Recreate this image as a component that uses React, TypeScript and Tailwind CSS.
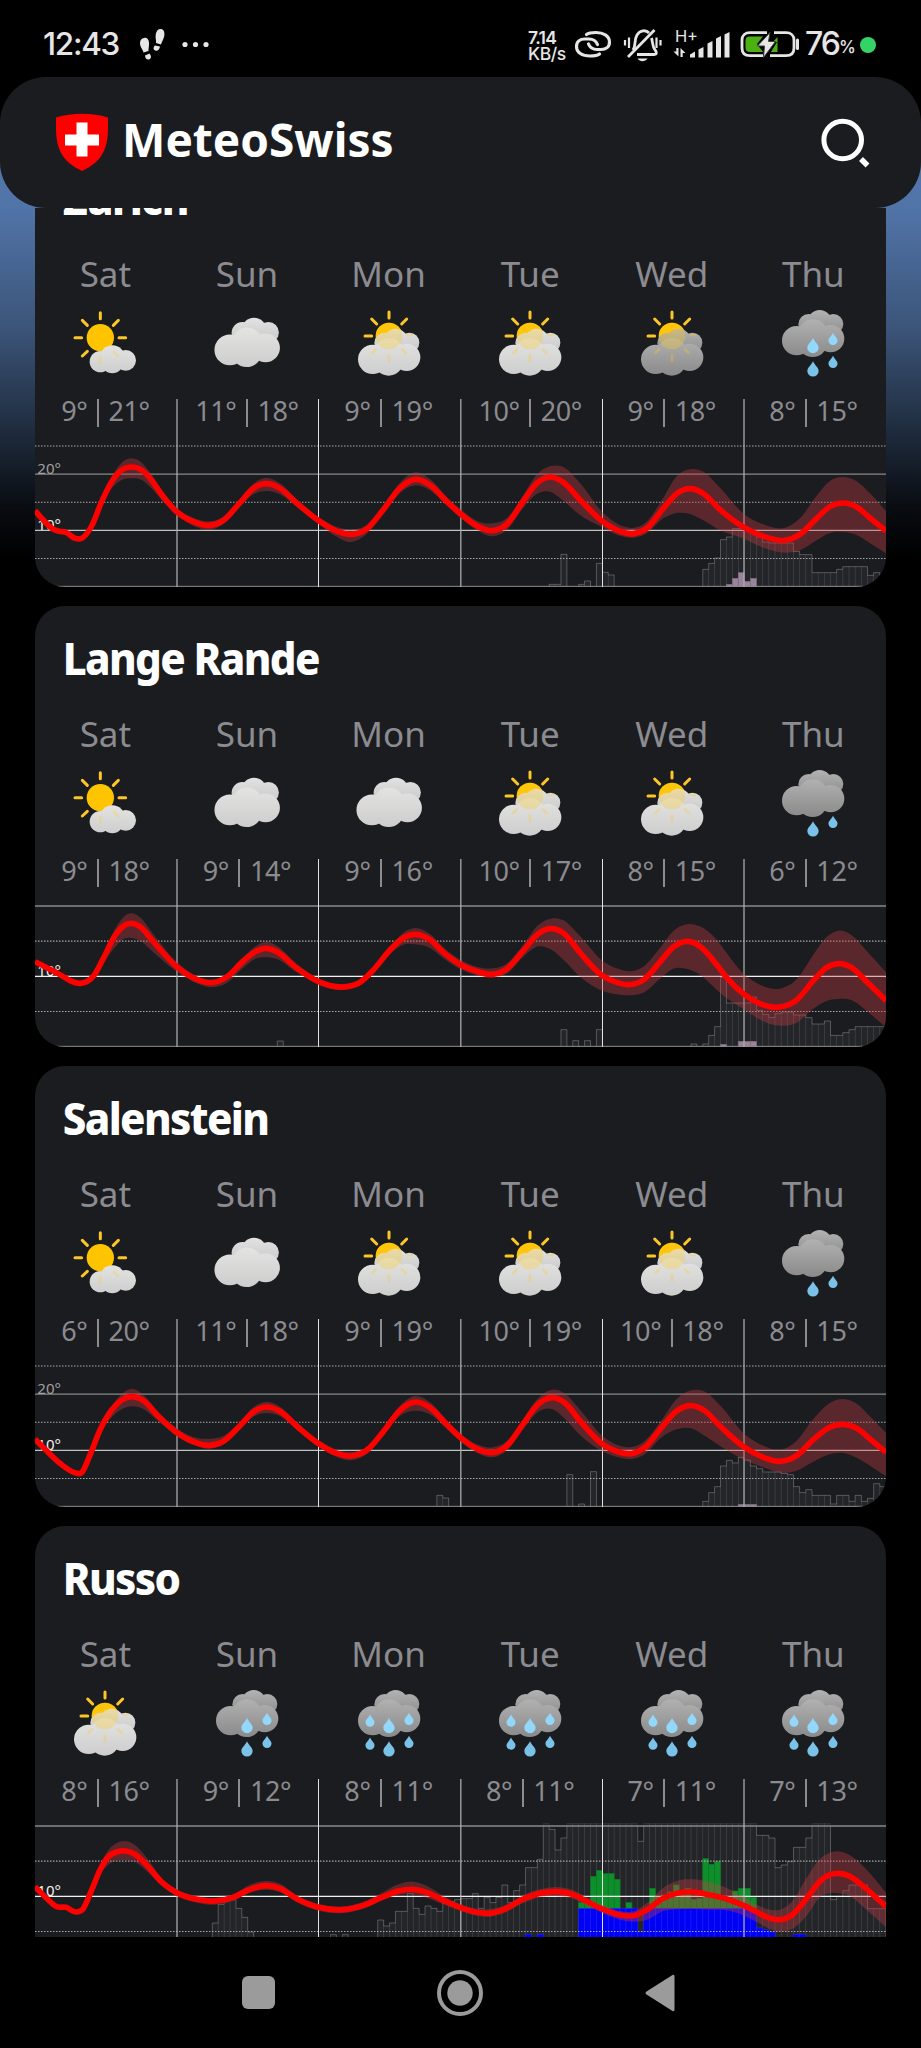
import React from "react";

type Sky = "sunSmallCloud" | "cloudy" | "sunClouds" | "sunGrey" | "rain2" | "rain4" | "rain6";
// x, y, upper spread, lower spread (three units per pixel)
type CurvePoint = [number, number, number, number];
// first hour index, bar heights
type Run = [number, number[]];

interface Station {
  name: string;
  days: { day: string; sky: Sky; low: number; high: number }[];
  max: 20 | 25;
  curve: CurvePoint[];
  chance: Run[];
  pink?: Run[];
  blue?: Run[];
  green?: Run[];
}

const W = 2553;
const H = 564;
const DAY = 425.5;

const times = (n: number, v: number): number[] => Array.from({ length: n }, () => v);

const DAYS = ["Sat", "Sun", "Mon", "Tue", "Wed", "Thu"];
const week = (rows: [Sky, number, number][]) =>
  rows.map(([sky, low, high], i) => ({ day: DAYS[i], sky, low, high }));

const STATIONS: Station[] = [
  {
    name: "Zürich",
    max: 25,
    days: week([
      ["sunSmallCloud", 9, 21],
      ["cloudy", 11, 18],
      ["sunClouds", 9, 19],
      ["sunClouds", 10, 20],
      ["sunGrey", 9, 18],
      ["rain4", 8, 15],
    ]),
    curve: [
      [0, 335, 0, 0], [25, 363, 0, 0], [55, 391, 0, 0], [73, 397, 0, 0], [93, 400, 0, 0], [120, 418, 0, 0], [140, 418, 0, 0],
      [170, 381, 5, 5], [200, 308, 10, 10], [230, 248, 14, 20], [260, 213, 22, 30], [292, 204, 26, 34], [320, 213, 22, 30],
      [345, 238, 18, 25], [385, 293, 13, 15], [425, 338, 11, 11], [475, 368, 12, 12], [525, 379, 12, 14], [565, 364, 11, 12],
      [615, 311, 11, 13], [655, 268, 14, 18], [695, 254, 18, 22], [735, 268, 15, 18], [785, 312, 11, 12], [851, 365, 10, 10],
      [900, 394, 12, 16], [947, 406, 14, 23], [995, 390, 12, 14], [1045, 332, 13, 13], [1095, 267, 16, 15], [1142, 241, 21, 18],
      [1185, 258, 18, 16], [1235, 307, 14, 13], [1277, 345, 14, 12], [1325, 380, 15, 13], [1373, 395, 22, 17], [1415, 376, 18, 17],
      [1465, 306, 18, 20], [1505, 253, 26, 32], [1545, 234, 32, 44], [1585, 250, 46, 55], [1635, 302, 50, 46], [1702, 367, 28, 18],
      [1750, 395, 19, 14], [1797, 404, 18, 12], [1835, 388, 20, 15], [1885, 328, 32, 30], [1925, 284, 52, 58], [1965, 269, 58, 76],
      [2005, 284, 66, 80], [2055, 332, 66, 62], [2127, 385, 40, 34], [2185, 412, 36, 34], [2250, 424, 38, 37], [2295, 406, 48, 48],
      [2345, 358, 68, 66], [2385, 323, 77, 79], [2425, 312, 78, 87], [2465, 324, 77, 84], [2505, 357, 74, 76], [2553, 396, 60, 67],
    ],
    chance: [
      [87, [8, 8, 98]], [92, [8, 18]], [95, [71, 44, 36]],
      [113, [53, 71, 87, 142, 150, 175, 175, 170, 160, 150, 135, 132, 132, 132, 132, 107, 97, 97, 43, 43, 43, 43, 53, 61, 61, 61, 61, 35, 43, 35]],
    ],
    pink: [[117, [8, 26, 43, 17, 26]]],
  },
  {
    name: "Lange Rande",
    max: 20,
    days: week([
      ["sunSmallCloud", 9, 18],
      ["cloudy", 9, 14],
      ["cloudy", 9, 16],
      ["sunClouds", 10, 17],
      ["sunClouds", 8, 15],
      ["rain2", 6, 12],
    ]),
    curve: [
      [0, 308, 0, 0], [45, 331, 0, 0], [85, 353, 0, 0], [105, 365, 0, 0], [137, 373, 0, 0], [175, 352, 5, 5], [205, 298, 12, 15],
      [240, 230, 20, 35], [270, 198, 28, 40], [290, 193, 30, 44], [315, 203, 28, 42], [355, 248, 22, 32], [425, 323, 14, 15],
      [485, 361, 10, 12], [530, 371, 9, 14], [575, 354, 10, 18], [625, 306, 12, 20], [665, 276, 16, 22], [693, 268, 20, 27],
      [725, 278, 18, 22], [785, 327, 13, 13], [851, 368, 9, 9], [925, 384, 9, 9], [975, 370, 9, 9], [1015, 333, 9, 9],
      [1065, 273, 10, 12], [1105, 237, 16, 20], [1140, 226, 19, 30], [1185, 242, 17, 25], [1225, 280, 15, 18], [1277, 317, 14, 14],
      [1325, 337, 14, 12], [1373, 346, 18, 10], [1415, 330, 16, 14], [1465, 275, 18, 18], [1510, 224, 26, 38], [1547, 209, 30, 62],
      [1585, 222, 38, 80], [1635, 281, 50, 72], [1702, 350, 45, 45], [1745, 370, 42, 36], [1783, 377, 40, 32], [1825, 363, 40, 38],
      [1875, 309, 42, 50], [1915, 264, 48, 65], [1960, 247, 52, 84], [1995, 262, 60, 85], [2045, 317, 75, 75], [2075, 356, 74, 62],
      [2127, 406, 60, 45], [2175, 434, 57, 48], [2235, 444, 55, 56], [2285, 423, 62, 68], [2335, 365, 78, 84], [2375, 326, 92, 100],
      [2410, 314, 99, 106], [2450, 326, 97, 98], [2495, 368, 92, 88], [2553, 425, 85, 80],
    ],
    chance: [
      [41, [18]], [89, [52]], [91, [19]], [93, [19]], [95, [52]], [111, [9]],
      [113, [9, 35, 61, 209, 132, 132, 132, 132, 150, 110, 98, 88, 100, 105, 105, 96, 96, 88, 69, 69, 78, 35, 35, 43, 52, 61, 61, 61, 61, 61]],
    ],
    pink: [[116, [8]], [119, [17, 17, 17]]],
  },
  {
    name: "Salenstein",
    max: 25,
    days: week([
      ["sunSmallCloud", 6, 20],
      ["cloudy", 11, 18],
      ["sunClouds", 9, 19],
      ["sunClouds", 10, 19],
      ["sunClouds", 10, 18],
      ["rain2", 8, 15],
    ]),
    curve: [
      [0, 360, 0, 0], [35, 395, 0, 0], [75, 433, 0, 0], [120, 461, 0, 0], [140, 461, 0, 0], [165, 408, 0, 4], [195, 333, 8, 10],
      [230, 273, 12, 22], [260, 243, 18, 28], [292, 233, 24, 29], [325, 245, 18, 25], [370, 292, 13, 15], [425, 340, 12, 12],
      [475, 368, 14, 10], [525, 379, 20, 10], [565, 367, 16, 10], [615, 320, 11, 11], [655, 279, 14, 14], [695, 264, 16, 18],
      [735, 277, 14, 14], [785, 321, 11, 11], [851, 374, 10, 10], [900, 401, 11, 11], [947, 411, 12, 13], [995, 394, 11, 12],
      [1045, 338, 11, 12], [1095, 274, 14, 16], [1140, 249, 18, 26], [1185, 266, 16, 20], [1235, 316, 13, 14], [1277, 356, 12, 12],
      [1325, 389, 13, 12], [1373, 401, 16, 14], [1415, 381, 14, 14], [1465, 314, 14, 16], [1505, 260, 18, 22], [1553, 236, 24, 35],
      [1590, 252, 28, 48], [1635, 306, 34, 42], [1702, 375, 25, 22], [1750, 399, 20, 16], [1790, 404, 20, 16], [1830, 385, 20, 20],
      [1880, 325, 22, 30], [1925, 276, 36, 55], [1968, 260, 46, 68], [2010, 276, 58, 75], [2055, 321, 62, 60], [2127, 384, 40, 38],
      [2185, 415, 35, 30], [2235, 427, 34, 34], [2285, 410, 45, 45], [2335, 362, 62, 66], [2380, 327, 72, 80], [2425, 316, 76, 86],
      [2465, 328, 74, 88], [2505, 360, 68, 80], [2553, 400, 58, 72],
    ],
    chance: [
      [68, [35, 27]], [90, [97]], [92, [9]], [94, [106]],
      [113, [17, 43, 61, 123, 140, 132, 149, 141, 123, 115, 105, 105, 105, 101, 97, 61, 43, 52, 35, 35, 35, 9, 35, 35, 17, 35, 17, 26, 70, 61]],
    ],
    pink: [[119, [8, 8, 8]]],
  },
  {
    name: "Russo",
    max: 20,
    days: week([
      ["sunClouds", 8, 16],
      ["rain4", 9, 12],
      ["rain6", 8, 11],
      ["rain6", 8, 11],
      ["rain6", 7, 11],
      ["rain6", 7, 13],
    ]),
    curve: [
      [0, 323, 0, 0], [35, 358, 0, 0], [65, 383, 0, 0], [93, 385, 0, 0], [123, 399, 0, 0], [143, 391, 0, 0], [170, 333, 8, 8],
      [195, 273, 12, 14], [220, 233, 20, 24], [245, 219, 27, 26], [272, 216, 30, 28], [300, 226, 28, 24], [335, 258, 22, 18],
      [380, 309, 12, 12], [425, 341, 10, 10], [485, 361, 10, 10], [540, 366, 9, 11], [595, 355, 10, 10], [645, 331, 14, 10],
      [695, 320, 14, 12], [735, 328, 14, 12], [785, 359, 10, 10], [851, 385, 10, 10], [925, 392, 10, 10], [985, 379, 10, 10],
      [1045, 353, 14, 10], [1090, 336, 20, 12], [1135, 331, 23, 16], [1175, 340, 20, 16], [1225, 364, 14, 12], [1277, 386, 10, 10],
      [1325, 400, 11, 10], [1365, 403, 13, 10], [1405, 392, 11, 11], [1465, 360, 12, 12], [1515, 343, 12, 12], [1570, 338, 14, 14],
      [1615, 347, 13, 13], [1655, 367, 12, 12], [1702, 390, 12, 12], [1755, 408, 12, 14], [1795, 410, 13, 18], [1835, 393, 20, 30],
      [1885, 358, 32, 38], [1925, 343, 37, 48], [1975, 339, 38, 50], [2025, 348, 38, 44], [2075, 360, 33, 34], [2127, 380, 25, 30],
      [2165, 399, 22, 30], [2200, 416, 25, 32], [2235, 422, 30, 36], [2270, 409, 40, 42], [2315, 358, 62, 52], [2355, 307, 68, 48],
      [2385, 287, 66, 55], [2410, 283, 66, 60], [2445, 292, 63, 60], [2485, 322, 60, 62], [2553, 383, 42, 62],
    ],
    chance: [
      [30, [132, 188, 200, 202, 176, 149, 105]], [50, [97]], [52, [97]],
      [58, [141, 123, 132, 167, 167, 220, 176, 158, 183, 176, 167, 192, 195, 202, 205, 205, 220, 176, 209, 193, 209, 246, 193, 229, 246, 298, 298, 323, 431, 413, 351, 387,
        ...times(12, 431), 377, ...times(19, 431), 395, 395, 387, 298, 306, 316, 359, 359, 387, 431, 431, 431, 202, 212, 229, 246, 246, 246, 175, 175, 175]],
    ],
    blue: [[83, [98]], [85, [98]], [92, [...times(10, 175), 105, ...times(19, 175), 117, 112, 105]], [128, [98, 98]]],
    green: [
      [92, [193, 193, 272, 290, 280, 280, 263]], [100, [193]],
      [104, [236, 209, 216, 225, 246, 229, 236, 203, 206, 325, 308, 316, 205, 200, 228, 236, 236, 209]],
    ],
  },
];

// The last day holds only 23 hourly bars.
const hourX = (i: number): number =>
  i <= 120 ? (i * DAY) / 24 : 5 * DAY + ((i - 120) * DAY) / 23;

function slopeAt(points: [number, number][], i: number): number {
  const last = points.length - 1;
  const slope = (a: number) => (points[a + 1][1] - points[a][1]) / (points[a + 1][0] - points[a][0]);
  if (i === 0) return slope(0);
  if (i === last) return slope(last - 1);
  const before = points[i][0] - points[i - 1][0];
  const after = points[i + 1][0] - points[i][0];
  return (slope(i - 1) * after + slope(i) * before) / (before + after);
}

function spline(points: [number, number][]): string {
  let d = "";
  for (let i = 0; i < points.length - 1; i++) {
    const [x1, y1] = points[i];
    const [x2, y2] = points[i + 1];
    const w = (x2 - x1) / 3;
    d += `C${x1 + w} ${y1 + slopeAt(points, i) * w} ${x2 - w} ${y2 - slopeAt(points, i + 1) * w} ${x2} ${y2}`;
  }
  return d;
}

function bandPath(curve: CurvePoint[]): string {
  const up = curve.map(([x, y, u]): [number, number] => [x, y - u]);
  const down = curve.map(([x, y, , l]): [number, number] => [x, y + l]).reverse();
  return `M${up[0][0]} ${up[0][1]}${spline(up)}L${down[0][0]} ${down[0][1]}${spline(down)}Z`;
}

function outline([start, heights]: Run): string {
  let d = `M${hourX(start)} ${H}`;
  heights.forEach((h, i) => {
    d += `V${H - h}H${hourX(start + i + 1)}`;
  });
  return `${d}V${H}`;
}

function Bars({ runs, fill, stroke }: { runs: Run[]; fill: string; stroke: string }) {
  return (
    <g fill={fill} stroke={stroke} strokeWidth="2">
      {runs.flatMap(([start, heights]) =>
        heights.map((h, i) => (
          <rect
            key={start + i}
            x={hourX(start + i)}
            y={H - h}
            width={hourX(start + i + 1) - hourX(start + i)}
            height={h}
          />
        )),
      )}
    </g>
  );
}

function Chart({ station }: { station: Station }) {
  const { curve, max } = station;
  const steps = max / 5;
  const levels = Array.from({ length: steps + 1 }, (_, i) => ({
    value: max - i * 5,
    y: 141 + (i * 422) / steps,
  }));
  return (
    <svg className="block h-[188px] w-[851px]" viewBox={`0 0 ${W} ${H}`}>
      <Bars runs={station.chance} fill="rgba(255,255,255,0.045)" stroke="rgba(255,255,255,0.085)" />
      <g fill="none" stroke="rgba(255,255,255,0.2)" strokeWidth="3">
        {station.chance.map((run) => (
          <path key={run[0]} d={outline(run)} clipPath="url(#plot-area)" />
        ))}
      </g>
      {station.green && <Bars runs={station.green} fill="#0f8f2c" stroke="#0b7c27" />}
      {station.blue && <Bars runs={station.blue} fill="#0000f5" stroke="#1c1cff" />}
      {station.pink && <Bars runs={station.pink} fill="#9b839c" stroke="#7d6b7f" />}
      {levels.map(({ value, y }) => {
        if (value === 0) {
          return <path key={value} d={`M0 562H${W}`} stroke="#8b8b8d" strokeWidth="3" />;
        }
        return value % 10 === 5 ? (
          <path key={value} d={`M0 ${y}H${W}`} stroke="#a9a9ab" strokeWidth="3.5" strokeDasharray="4.5 4.5" />
        ) : (
          <path
            key={value}
            d={`M0 ${y}H${W}`}
            stroke={value === 10 ? (max === 20 ? "#f2f2f2" : "#c2c2c3") : "#87888a"}
            strokeWidth={value === 10 ? 3.5 : 4}
          />
        );
      })}
      <path d="M426 0V564M1277.5 0V564M2127 0V564" stroke="#b4b4b6" strokeWidth="3.6" />
      <path d="M850.5 0V564M1702.5 0V564" stroke="#e2e2e3" strokeWidth="3" />
      <g fontFamily="'Noto Sans', sans-serif" fontSize="45">
        {levels
          .filter(({ value, y }) => value % 10 === 0 && value > 0 && y > 150)
          .map(({ value, y }) => (
            <text key={value} x="7" y={y - 1} fill={value === 20 ? "#a0a0a2" : "#f2f2f2"}>
              {value}°
            </text>
          ))}
      </g>
      <path d={bandPath(curve)} fill="rgba(200,60,70,0.36)" />
      <path
        d={`M${curve[0][0]} ${curve[0][1]}${spline(curve.map(([x, y]) => [x, y]))}`}
        fill="none"
        stroke="#fb0200"
        strokeWidth="17"
        strokeLinejoin="round"
      />
    </svg>
  );
}

function Clouds({ tone, transform }: { tone: "light" | "grey"; transform?: string }) {
  return (
    <g transform={transform}>
      <g fill={`url(#${tone}-back)`}>
        <circle cx="88" cy="108" r="31" />
        <circle cx="121" cy="101" r="36" />
        <circle cx="162" cy="107" r="30" />
        <path d="M88 100H165V137H88Z" />
      </g>
      <g fill={`url(#${tone}-front)`}>
        <circle cx="52" cy="157" r="44" />
        <circle cx="101" cy="138" r="45" />
        <circle cx="154" cy="151" r="41" />
        <circle cx="100" cy="162" r="44" />
      </g>
    </g>
  );
}

function Drop({ x, y, s = 1, inside = false }: { x: number; y: number; s?: number; inside?: boolean }) {
  return (
    <path
      transform={`translate(${x} ${y}) scale(${s})`}
      d="M0 -23C4 -12 17 -4 17 6A17 16.5 0 0 1 -17 6C-17 -4 -4 -12 0 -23Z"
      fill={inside ? "#93d8fb" : "#7ac2e8"}
    />
  );
}

function SunBehind() {
  return (
    <>
      <circle cx="101" cy="87" r="40" fill="#ffc400" />
      <path
        d="M101 15V33M49 36L64 51M154 36L139 51M29 87H49"
        stroke="#fcc62a"
        strokeWidth="9"
        strokeLinecap="round"
      />
    </>
  );
}

function SunGhost() {
  return (
    <g opacity="0.3">
      <circle cx="101" cy="87" r="40" fill="#ffcb1f" />
      <path
        d="M101 146V162M62 127L51 138M140 127L151 138M157 84H170"
        stroke="#ffcb1f"
        strokeWidth="8"
        strokeLinecap="round"
      />
    </g>
  );
}

function SkyIcon({ sky }: { sky: Sky }) {
  return (
    <svg className="size-[70px]" viewBox="-4 0 210 210" fill="none">
      {sky === "sunSmallCloud" && (
        <g transform="translate(-18 0)">
          <circle cx="105" cy="92" r="41" fill="#ffc400" />
          <path
            d="M105 17V35M51 40L66 55M159 40L144 55M29 92H49M161 92H181M51 147L66 133"
            stroke="#fcc62a"
            strokeWidth="9"
            strokeLinecap="round"
          />
          <g fill="url(#small-cloud)">
            <circle cx="105" cy="164" r="32" />
            <circle cx="141" cy="153" r="38" />
            <circle cx="141" cy="166" r="33" />
            <circle cx="181" cy="160" r="31" />
          </g>
          <path
            d="M105 150V168M146 135L158 147"
            stroke="#ffcb1f"
            strokeWidth="8"
            strokeLinecap="round"
            opacity="0.28"
          />
        </g>
      )}
      {sky === "cloudy" && <Clouds tone="light" transform="translate(-5 -36) scale(1.05)" />}
      {(sky === "sunClouds" || sky === "sunGrey") && (
        <>
          <SunBehind />
          <Clouds tone={sky === "sunGrey" ? "grey" : "light"} />
          <SunGhost />
        </>
      )}
      {sky.startsWith("rain") && (
        <>
          <Clouds tone="grey" transform="translate(0 -56)" />
          <Drop x={101} y={186} />
          <Drop x={161} y={165} s={0.8} />
          {sky !== "rain2" && (
            <>
              <Drop x={101} y={116} inside />
              <Drop x={161} y={96} s={0.8} inside />
            </>
          )}
          {sky === "rain6" && (
            <>
              <Drop x={44} y={101} s={0.8} inside />
              <Drop x={44} y={170} s={0.8} />
            </>
          )}
        </>
      )}
    </svg>
  );
}

function StationCard({ station }: { station: Station }) {
  return (
    <section className="flex h-[441px] w-[851px] shrink-0 flex-col overflow-hidden rounded-[30px] bg-[#1b1c1f]">
      <h2 className="h-[106px] origin-left scale-x-[0.955] pt-[21px] pl-[29px] text-[44px] leading-[62px] font-extrabold tracking-[-1.7px] text-white">
        {station.name}
      </h2>
      <div className="-ml-[0.4px] grid h-[147px] w-[849.6px] grid-cols-6">
        {station.days.map(({ day, sky }) => (
          <div key={day} className="flex flex-col items-center">
            <span className="h-[55px] text-[35px] leading-[44px] text-[#8b8b90]">{day}</span>
            <SkyIcon sky={sky} />
          </div>
        ))}
      </div>
      <div className="grid h-[188px]">
        <div className="col-start-1 row-start-1">
          <Chart station={station} />
        </div>
        <div className="col-start-1 row-start-1 -ml-[0.4px] grid h-[30px] w-[849.6px] grid-cols-6 text-[27px] leading-[24px] tracking-[-0.4px] text-[#8b8b90]">
          {station.days.map(({ day, low, high }) => (
            <div key={day} className="flex justify-center">
              <span>{low}°</span>
              <span className="mx-[9.500px] h-[28px] w-[2px] bg-[#8b8b90]" />
              <span>{high}°</span>
            </div>
          ))}
        </div>
      </div>
    </section>
  );
}

function SharedDefs() {
  return (
    <svg className="absolute size-0" aria-hidden="true">
      <defs>
        <linearGradient id="light-front" gradientUnits="userSpaceOnUse" x1="0" y1="93" x2="0" y2="206">
          <stop offset="0" stopColor="#e3e3e2" />
          <stop offset="1" stopColor="#cdcdcd" />
        </linearGradient>
        <linearGradient id="light-back" gradientUnits="userSpaceOnUse" x1="0" y1="65" x2="0" y2="137">
          <stop offset="0" stopColor="#e2e2e2" />
          <stop offset="1" stopColor="#c8c8c8" />
        </linearGradient>
        <linearGradient id="small-cloud" gradientUnits="userSpaceOnUse" x1="0" y1="115" x2="0" y2="198">
          <stop offset="0" stopColor="#e3e3e2" />
          <stop offset="1" stopColor="#cecece" />
        </linearGradient>
        <linearGradient id="grey-front" gradientUnits="userSpaceOnUse" x1="0" y1="93" x2="0" y2="206">
          <stop offset="0" stopColor="#b1b1b1" />
          <stop offset="1" stopColor="#8a8a8a" />
        </linearGradient>
        <linearGradient id="grey-back" gradientUnits="userSpaceOnUse" x1="0" y1="65" x2="0" y2="137">
          <stop offset="0" stopColor="#b3b3b3" />
          <stop offset="1" stopColor="#8d8d8d" />
        </linearGradient>
        <clipPath id="plot-area">
          <rect x="0" y="141" width="2553" height="423" />
        </clipPath>
      </defs>
    </svg>
  );
}

function StatusBar() {
  return (
    <div className="flex h-[77px] shrink-0 items-start pt-[24px] pl-[43px] text-[#e6e6e6] [font-family:Inter,sans-serif]">
      <span className="w-[95px] text-[31.5px] leading-[40px] font-medium tracking-[-1.3px]">12:43</span>
      <svg className="ml-[1px] h-[40px] w-[28px]" viewBox="0 0 28 40" fill="#e6e6e6">
        <path d="M5 14C8.600 13 10.500 17 10 21C9.700 24 9.500 25 9.500 27L4.500 28.500C3.500 25 1 23 1 19C1 16 2.800 14.400 5 14Z" />
        <path d="M6 31.500L10.500 29.500C12.500 32 12.500 34.500 10 35.500C7.500 36 6.300 34.500 6 31.500Z" />
        <path d="M22 5C25 5.500 26 8.500 25 13C24.300 16 22.500 18 22 20.500L17 19C17.500 16 16 14 16.800 10C17.500 6.500 19.500 4.600 22 5Z" />
        <path d="M16 21.500L21 22.500C20.500 25.500 18.500 27.500 16.200 26.500C13.800 25.500 14.300 23 16 21.500Z" />
      </svg>
      <svg className="ml-[13px] h-[40px] w-[32px]" viewBox="0 0 32 40" fill="#e6e6e6">
        <circle cx="5" cy="20.500" r="2.600" />
        <circle cx="15.500" cy="20.500" r="2.600" />
        <circle cx="26" cy="20.500" r="2.600" />
      </svg>
      <div className="ml-[316px] flex w-[46px] flex-col pt-[6px] text-[17.5px] leading-[16px] font-semibold tracking-[-0.7px]">
        <span>7.14</span>
        <span className="font-medium tracking-[-0.4px]">KB/s</span>
      </div>
      <svg className="h-[40px] w-[38px]" viewBox="0 0 38 40" fill="none" stroke="#e6e6e6" strokeWidth="3.200" strokeLinecap="round">
        <path d="M12.500 10.500C15 8.500 17 8.500 22 8.500C29 8.500 35.500 11.500 35.500 18C35.500 23 32 25.500 27 25.500H23C18 25.500 15.500 22.500 14.500 20" />
        <path d="M25.500 30C23 32 21 32 16 32C8 32 2.500 28.500 2.500 22.500C2.500 17.500 6 15 11 15H15C20 15 22.500 18 23.500 20.500" />
      </svg>
      <svg className="ml-[11px] h-[40px] w-[40px]" viewBox="0 0 40 40" fill="none" stroke="#e6e6e6" strokeWidth="2.800">
        <path d="M10 26C13 22 11 16 14 11C17 6 23 5.500 26 9" />
        <path d="M28.500 14C30 18 28.500 22 33 27.500C34 30 33 30.500 31 30.500H14" />
        <path d="M31.500 6L5 33" />
        <path d="M14.500 34.500C17 38 22 38 24.500 34.500Z" fill="#e6e6e6" stroke="none" />
        <path d="M6 13.500V24M2 16V21.500M33.500 13.500V24M37.500 16V21.500" strokeWidth="2.200" />
      </svg>
      <svg className="ml-[9px] h-[40px] w-[60px]" viewBox="0 0 60 40" fill="#e6e6e6">
        <text x="3" y="17.500" fontSize="16.500" fontFamily="Inter, sans-serif" textLength="23">H+</text>
        <path d="M6.500 24V32.500L1.500 27.500H4.300V24ZM8.500 33V24L13.500 29H10.700V33Z" />
        <path d="M18 30.500L23 27.500V33.500H18ZM26.500 25.500L31.500 23V33.500H26.500ZM35.500 19.500L40.500 17V33.500H35.500ZM44 14.500L49 12V33.500H44ZM52.500 10.500L57.500 8V33.500H52.500Z" />
      </svg>
      <svg className="ml-[8px] h-[40px] w-[60px]" viewBox="0 0 60 40" fill="none">
        <path d="M27 8.700H10C5 8.700 2 11.500 2 16V24C2 29 5 31.700 10 31.700H23M34 8.700H46C51 8.700 54 11.500 54 16V24C54 29 51 31.700 46 31.700H30" stroke="#e6e6e6" strokeWidth="2.800" />
        <path d="M10 12.500H23L17 20L23 28H10C7 28 5.500 26.500 5.500 24V16.500C5.500 14 7 12.500 10 12.500ZM37.500 13V28H31L37 18H33Z" fill="#4caf12" />
        <path d="M30 8.500L17.500 22H24.500L23.500 33.500L35.500 17.500H28.500Z" fill="#e6e6e6" stroke="#3a3f3a" />
        <path d="M57.500 16V24.500" stroke="#e6e6e6" strokeWidth="3" strokeLinecap="round" />
      </svg>
      <span className="ml-[5px] w-[34px] text-[32px] leading-[40px] font-medium tracking-[-2px]">76</span>
      <span className="w-[20px] pt-[6px] text-[17px] leading-[34px] font-medium">%</span>
      <span className="mt-[12.500px] ml-[1px] size-[16px] rounded-full bg-[#35d366]" />
    </div>
  );
}

function Header() {
  return (
    <header className="flex h-[131px] shrink-0 items-start rounded-[46px] bg-[#1b1c1f] pl-[56px] text-white">
      <svg className="mt-[36px] h-[59px] w-[52px]" viewBox="0 0 52 59">
        <path d="M0 4.500C16 -0.500 36 -0.500 52 4.500C52.500 28 52 46 26 58C0 46 -0.500 28 0 4.500Z" fill="#fe0000" />
        <path d="M20.500 9.500H31.500V21.500H43V32.500H31.500V43.500H20.500V32.500H9V21.500H20.500Z" fill="#fff" />
      </svg>
      <h1 className="mt-[30px] ml-[14px] w-[290px] text-[46px] leading-[64px] font-bold">MeteoSwiss</h1>
      <svg className="mt-[40px] ml-[408px] h-[52px] w-[52px]" viewBox="0 0 52 52" fill="none" stroke="#fff">
        <circle cx="22.700" cy="23" r="18.800" strokeWidth="5" />
        <path d="M41 42L47.500 48.500" strokeWidth="5.500" />
      </svg>
    </header>
  );
}

function NavBar() {
  return (
    <nav className="grid h-[111px] shrink-0 grid-cols-[516px_1fr] bg-black">
      <div className="flex items-center pl-[242px]">
        <span className="size-[33px] rounded-[6px] bg-[#9b9b9b]" />
        <svg className="ml-[162px] size-[46px]" viewBox="0 0 46 46" fill="none">
          <circle cx="23" cy="23" r="21" stroke="#9b9b9b" strokeWidth="4" />
          <circle cx="23" cy="23" r="12.700" fill="#9b9b9b" />
        </svg>
      </div>
      <div className="flex items-center pl-[128px]">
        <svg className="h-[40px] w-[32px]" viewBox="0 0 32 40">
          <path d="M2.500 18.500L28.500 2Q30.500 1 30.500 3.500V36.500Q30.500 39 28.500 38L2.500 21.500Q0.500 20 2.500 18.500Z" fill="#9b9b9b" />
        </svg>
      </div>
    </nav>
  );
}

export default function App() {
  return (
    <div className="flex h-[2048px] w-[921px] flex-col overflow-hidden bg-black bg-[linear-gradient(to_bottom,#000_0px,#000_138px,#5478ac_139px,#5174a8_208px,#3b5478_330px,#1f2c3e_430px,#080b10_510px,#000_560px)] [font-family:'Noto_Sans',sans-serif]">
      <SharedDefs />
      <StatusBar />
      <Header />
      <main className="h-[1729px] shrink-0 overflow-hidden px-[35px]">
        <div className="-mt-[62px] flex flex-col gap-[19px]">
          {STATIONS.map((station) => (
            <StationCard key={station.name} station={station} />
          ))}
        </div>
      </main>
      <NavBar />
    </div>
  );
}
